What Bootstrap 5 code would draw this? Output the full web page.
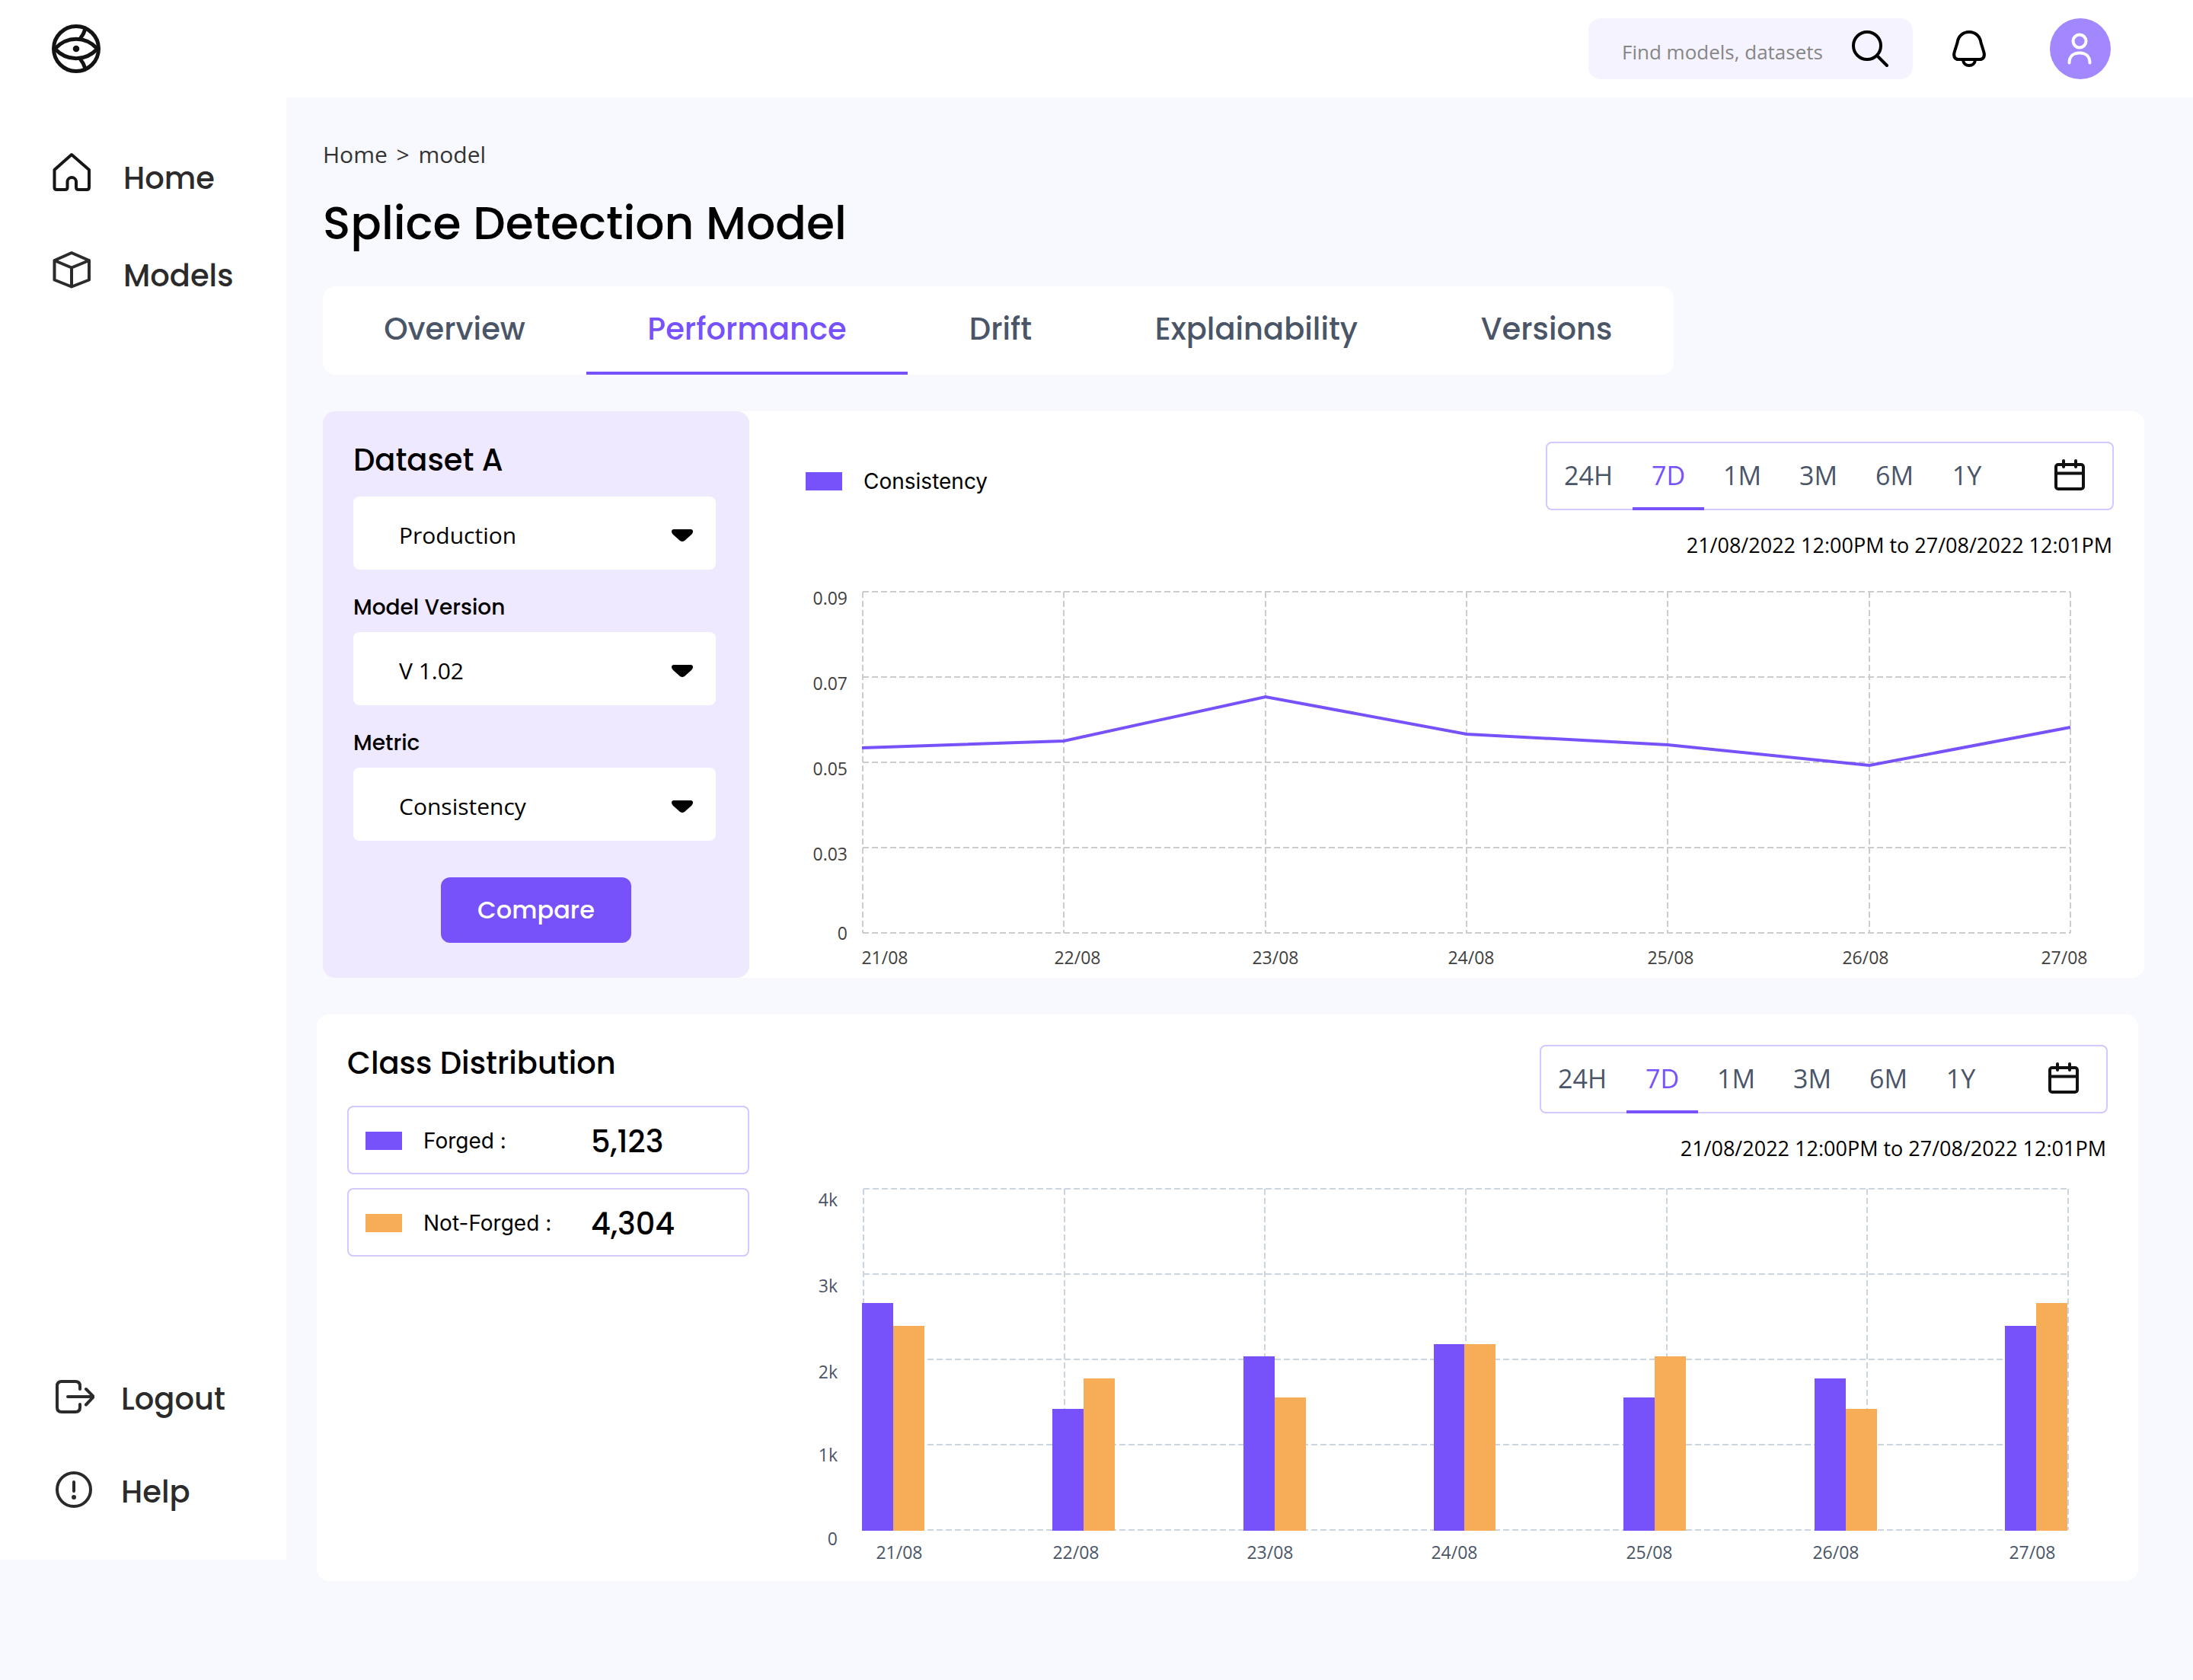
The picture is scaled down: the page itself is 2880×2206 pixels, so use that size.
<!DOCTYPE html>
<html lang="en">
<head>
<meta charset="utf-8">
<meta name="viewport" content="width=device-width, initial-scale=1">
<title>Splice Detection Model</title>
<link rel="stylesheet" href="https://cdn.jsdelivr.net/npm/bootstrap@5.3.0/dist/css/bootstrap.min.css">
<style>
  :root { --violet: #7752fa; --lilac: #d3c9ff; --slate: #4a5568; --amber: #f7ad57; }
  body { background: #f8f9fe; color: #000; font-family: "Open Sans", "Noto Sans", sans-serif; font-size: 26px; }
  svg { display: block; }
  .ico { fill: none; stroke: currentColor; stroke-width: 4; stroke-linecap: round; stroke-linejoin: round; flex: none; }
  .display-face { font-family: Poppins, Inter, sans-serif; font-weight: 500; }
  .inter-face { font-family: Inter, sans-serif; font-size: 28px; }

  .topbar { height: 128px; padding: 0 108px 0 68px; }
  .logo-link { color: #131313; }
  .finder { background: #f5f3ff; border-radius: 16px; width: 426px; height: 80px; padding: 0 32px 0 44px; }
  .finder input { font-size: 26px; line-height: 36px; padding: 8px 0 0; color: #333; }
  .finder input::placeholder { color: #868686; opacity: 1; }
  .finder input:focus { box-shadow: none; }
  .bell-btn { margin: 0 82px 0 50px; }
  .avatar-btn { width: 80px; height: 80px; background: #a287ff; color: #fff; }

  .side { width: 376px; flex: none; min-height: calc(100vh - 286px); padding: 72px 0 62px; }
  .side a { color: #2b2b2b; font-size: 40px; line-height: 48px; }
  .side-top { padding-left: 68px; gap: 72px; }
  .side-top a { gap: 42px; height: 56px; }
  .side-top span { padding-top: 10px; }
  .side-end { padding-left: 72px; gap: 66px; }
  .side-end a { gap: 35px; height: 56px; }
  .side-end span { padding-top: 5px; }

  .page { padding: 55px 64px 0 48px; min-width: 0; }
  .crumbs { font-size: 30px; line-height: 40px; color: #333; }
  .crumbs span { margin: 0 4px; }
  .page-title { font-size: 60px; line-height: 72px; margin: 34px 0 47px; }
  .tabs { display: grid; grid-template-columns: 346fr 422fr 244fr 428fr 334fr; width: 76%; max-width: 1774px; border-radius: 16px; overflow: hidden; }
  .tabs .nav-link { padding: 32px 0; color: var(--slate); font-size: 40px; line-height: 48px; text-align: center; border-bottom: 4px solid transparent; }
  .tabs .nav-link.active { color: var(--violet); border-color: var(--violet); }

  .panel { border-radius: 16px; margin-top: 48px; }
  .panel-shift { margin-left: -8px; margin-right: 8px; }
  .panel h2 { font-size: 40px; line-height: 48px; margin: 0; }
  .filters { background: #efe9ff; border-radius: 16px; width: 560px; flex: none; padding: 40px 40px 46px; }
  .filters h2 label { display: block; margin-bottom: 24px; }
  .filters .sub-label { font-size: 28px; line-height: 36px; margin: 32px 0 14px; display: block; }
  .filters .form-select { --bs-form-select-bg-img: url("data:image/svg+xml,%3csvg xmlns='http://www.w3.org/2000/svg' viewBox='0 0 28 16'%3e%3cpath d='M3 0H25Q28 0 28 3Q28 5 26 7L17 15Q14 17 11 15L2 7Q0 5 0 3Q0 0 3 0Z'/%3e%3c/svg%3e");
    width: calc(100% - 4px); height: 96px; border: 0; border-radius: 8px; padding: 5px 72px 0 60px; font-size: 30px; line-height: 40px; color: #000; background-position: right 30px top 43px; background-size: 28px 16px; }
  .compare-btn { display: block; width: 250px; height: 86px; margin: 48px auto 0; border-radius: 12px; background: var(--violet); color: #fff; font-size: 32px; line-height: 40px; }
  .compare-btn:hover { background: #6842ea; color: #fff; }

  .chart-area { padding: 40px 40px 0 74px; min-width: 0; }
  .swatch { width: 48px; height: 24px; background: var(--violet); flex: none; }
  .swatch-amber { background: var(--amber); }
  .legend { height: 24px; margin-top: 40px; gap: 28px; }
  .range { width: 746px; height: 90px; border: 2px solid var(--lilac); border-radius: 8px; }
  .range button { border: 0; background: none; padding: 0 0 3px; font-size: 34px; color: var(--slate); border-bottom: 4px solid transparent; border-top: 4px solid transparent; width: 100px; margin-bottom: -2px; }
  .range button.on { color: var(--violet); border-bottom-color: var(--violet); width: 94px; }
  .range .w-first { width: 112px; padding-right: 4px; }
  .range .w-last { width: 90px; }
  .range .cal { width: 48px; margin: 0 32px 0 auto; color: #111; border: 0; }
  .period { font-size: 27px; line-height: 36px; margin: 28px 2px 22px 0; }
  .chart { width: 100%; height: auto; font-size: 23px; }
  .grid-line { fill: none; stroke-width: 2; stroke-dasharray: 8 4; }

  .tally { width: 528px; flex: none; }
  .tally-col { padding: 40px 0 0 40px; }
  .tally-row { height: 90px; border: 2px solid var(--lilac); border-radius: 8px; padding: 1px 0 0 22px; margin-bottom: 18px; }
  .tally-row dt { width: 220px; margin-left: 28px; font-weight: 400; }
  .tally-row dd { font-size: 40px; line-height: 48px; margin: 0; padding-top: 2px; }
  .tally dl { margin: 32px 0 0; }
</style>
<script src="https://cdn.jsdelivr.net/npm/bootstrap@5.3.0/dist/js/bootstrap.bundle.min.js"></script>
</head>
<body>
<header class="topbar bg-white d-flex align-items-center">
  <a href="#" class="me-auto logo-link" aria-label="Dashboard">
    <svg class="ico" width="64" height="64" viewBox="0 0 64 64">
      <g stroke-width="5"><circle cx="32" cy="32" r="29.5"/><path d="M4 32C20 15 44 15 60 32C44 49 20 49 4 32Z"/><path d="M37 19Q42 13 44 6M37 45Q42 51 44 58"/></g>
      <circle cx="32" cy="32" r="4.3" fill="currentColor" stroke="none"/>
    </svg>
  </a>
  <form class="finder d-flex align-items-center" role="search">
    <input class="form-control border-0 bg-transparent" type="search" placeholder="Find models, datasets" aria-label="Find models, datasets">
    <button type="button" class="btn p-0 border-0 text-black" aria-label="Search">
      <svg class="ico" width="48" height="48" viewBox="0 0 48 48"><circle cx="20" cy="20" r="18"/><path d="M33.5 33.5L46 46"/></svg>
    </button>
  </form>
  <button type="button" class="btn p-0 border-0 text-black bell-btn" aria-label="Notifications">
    <svg class="ico" width="48" height="48" viewBox="0 0 48 48"><path d="M24 2C15.5 2 9.500 8 8.500 16L4.500 29C3 35 6 38 10 38H38C42 38 45 35 43.500 29L39.500 16C38.500 8 32.500 2 24 2Z"/><path d="M16 39C16.500 43.500 20 46 24 46S31.500 43.500 32 39"/></svg>
  </button>
  <button type="button" class="btn p-0 border-0 rounded-circle avatar-btn" aria-label="Account">
    <svg class="ico" width="80" height="80" viewBox="0 0 80 80"><circle cx="39" cy="30" r="8.500"/><path d="M25.500 58.500C25.500 50 31 45.500 39 45.500S52.500 50 52.500 58.500"/></svg>
  </button>
</header>

<div class="d-flex align-items-start">
  <nav class="side bg-white d-flex flex-column justify-content-between display-face" aria-label="Main">
    <div class="side-top d-flex flex-column">
      <a href="#" class="d-flex text-decoration-none">
        <svg class="ico" width="52" height="52" viewBox="0 0 52 52"><path stroke="#161616" d="M26 3L3.500 23V46Q3.500 49 6.500 49H17.500Q20.500 49 20.500 46V38A5.800 5.800 0 0 1 32 38V46Q32 49 35 49H46Q49 49 49 46V23Z"/></svg>
        <span>Home</span></a>
      <a href="#" class="d-flex text-decoration-none">
        <svg class="ico" width="52" height="52" viewBox="0 0 52 52"><path d="M26 4L49 14V39.500L26 48.500L3.500 39.500V14ZM3.500 14L26 23.500L49 14M26 23.500V48.500"/></svg>
        <span>Models</span></a>
    </div>
    <div class="side-end d-flex flex-column">
      <a href="#" class="d-flex text-decoration-none">
        <svg class="ico" width="52" height="52" viewBox="0 0 52 52"><path d="M33 16V12Q33 6 27 6H9Q3 6 3 12V40Q3 46 9 46H27Q33 46 33 40V36M17 26H51M41 16L51 26L41 36.500"/></svg>
        <span>Logout</span></a>
      <a href="#" class="d-flex text-decoration-none">
        <svg class="ico" width="52" height="52" viewBox="0 0 52 52"><circle cx="25" cy="26" r="22"/><path d="M25 16V28"/><circle cx="25" cy="36" r="3" fill="currentColor" stroke="none"/></svg>
        <span>Help</span></a>
    </div>
  </nav>

  <main class="page flex-fill">
    <div class="crumbs"><a href="#" class="text-reset text-decoration-none">Home</a> <span>&gt;</span> <a href="#" class="text-reset text-decoration-none">model</a></div>
    <h1 class="page-title display-face">Splice Detection Model</h1>
    <nav class="tabs bg-white display-face" aria-label="Model sections">
      <a class="nav-link" href="#">Overview</a>
      <a class="nav-link active" href="#" aria-current="page">Performance</a>
      <a class="nav-link" href="#">Drift</a>
      <a class="nav-link" href="#">Explainability</a>
      <a class="nav-link" href="#">Versions</a>
    </nav>

    <section class="panel bg-white d-flex">
      <form class="filters">
        <h2 class="display-face"><label for="dataset">Dataset A</label></h2>
        <select id="dataset" class="form-select"><option>Production</option></select>
        <label class="sub-label display-face" for="version">Model Version</label>
        <select id="version" class="form-select"><option>V 1.02</option></select>
        <label class="sub-label display-face" for="metric">Metric</label>
        <select id="metric" class="form-select"><option>Consistency</option></select>
        <button type="button" class="btn compare-btn display-face">Compare</button>
      </form>
      <div class="chart-area flex-fill">
        <div class="d-flex justify-content-between align-items-start">
          <div class="legend d-flex align-items-center inter-face"><span class="swatch"></span>Consistency</div>
          <div>
            <div class="range d-flex" role="group" aria-label="Time range">
              <button type="button" class="w-first">24H</button><button type="button" class="on">7D</button><button type="button">1M</button><button type="button">3M</button><button type="button">6M</button><button type="button" class="w-last">1Y</button>
              <button type="button" class="cal" aria-label="Pick dates"><svg class="ico" width="48" height="48" viewBox="0 0 48 48"><rect x="6" y="10" width="36" height="32" rx="3"/><path d="M6 21.500H42M16 5V13M32 5V13"/></svg></button>
            </div>
            <p class="period text-end">21/08/2022 12:00PM to 27/08/2022 12:01PM</p>
          </div>
        </div>
        <svg class="chart" viewBox="0 0 1718 528" role="img" aria-label="Consistency by day">
          <path class="grid-line" stroke="#ccc" d="M75 21H1661M75 133H1661M75 245H1661M75 357H1661M75 469H1661M75 21V469M339 21V469M604 21V469M868 21V469M1132 21V469M1397 21V469M1661 21V469"/>
          <polyline fill="none" stroke="#7752fa" stroke-width="4" points="74,226 339,217 604,159 868,208 1132,222 1397,249 1661,199"/>
          <g fill="#404040" text-anchor="end"><text x="55" y="38">0.09</text><text x="55" y="150">0.07</text><text x="55" y="262">0.05</text><text x="55" y="374">0.03</text><text x="55" y="478">0</text></g>
          <g fill="#404040" text-anchor="middle"><text x="104" y="510">21/08</text><text x="357" y="510">22/08</text><text x="617" y="510">23/08</text><text x="874" y="510">24/08</text><text x="1136" y="510">25/08</text><text x="1392" y="510">26/08</text><text x="1653" y="510">27/08</text></g>
        </svg>
      </div>
    </section>

    <section class="panel panel-shift bg-white d-flex">
      <div class="tally-col">
        <div class="tally">
          <h2 class="display-face">Class Distribution</h2>
          <dl>
            <div class="tally-row d-flex align-items-center"><span class="swatch"></span><dt class="inter-face">Forged :</dt><dd class="display-face">5,123</dd></div>
            <div class="tally-row d-flex align-items-center"><span class="swatch swatch-amber"></span><dt class="inter-face">Not-Forged :</dt><dd class="display-face">4,304</dd></div>
          </dl>
        </div>
      </div>
      <div class="chart-area flex-fill">
        <div class="d-flex justify-content-end">
          <div>
            <div class="range d-flex" role="group" aria-label="Time range">
              <button type="button" class="w-first">24H</button><button type="button" class="on">7D</button><button type="button">1M</button><button type="button">3M</button><button type="button">6M</button><button type="button" class="w-last">1Y</button>
              <button type="button" class="cal" aria-label="Pick dates"><svg class="ico" width="48" height="48" viewBox="0 0 48 48"><rect x="6" y="10" width="36" height="32" rx="3"/><path d="M6 21.500H42M16 5V13M32 5V13"/></svg></button>
            </div>
            <p class="period text-end">21/08/2022 12:00PM to 27/08/2022 12:01PM</p>
          </div>
        </div>
        <svg class="chart" viewBox="0 0 1710 528" role="img" aria-label="Forged and not-forged counts by day">
          <path class="grid-line" stroke="#cbd5e0" d="M76 13H1658M76 125H1658M76 237H1658M76 349H1658M76 461H1658M76 13V461M340 13V461M603 13V461M867 13V461M1131 13V461M1394 13V461M1658 13V461"/>
          <path fill="#7752fa" d="M74 163h41V462h-41zM324 302h41V462h-41zM575 233h41V462h-41zM825 217h40V462h-40zM1074 287h41V462h-41zM1325 262h41V462h-41zM1575 193h41V462h-41z"/>
          <path fill="#f7ad57" d="M115 193h41V462h-41zM365 262h41V462h-41zM616 287h41V462h-41zM865 217h41V462h-41zM1115 233h41V462h-41zM1366 302h41V462h-41zM1616 163h41V462h-41z"/>
          <g fill="#4a5568" text-anchor="end"><text x="42" y="36">4k</text><text x="42" y="149">3k</text><text x="42" y="262">2k</text><text x="42" y="371">1k</text><text x="42" y="481">0</text></g>
          <g fill="#4a5568" text-anchor="middle"><text x="123" y="499">21/08</text><text x="355" y="499">22/08</text><text x="610" y="499">23/08</text><text x="852" y="499">24/08</text><text x="1108" y="499">25/08</text><text x="1353" y="499">26/08</text><text x="1611" y="499">27/08</text></g>
        </svg>
      </div>
    </section>
  </main>
</div>
</body>
</html>
